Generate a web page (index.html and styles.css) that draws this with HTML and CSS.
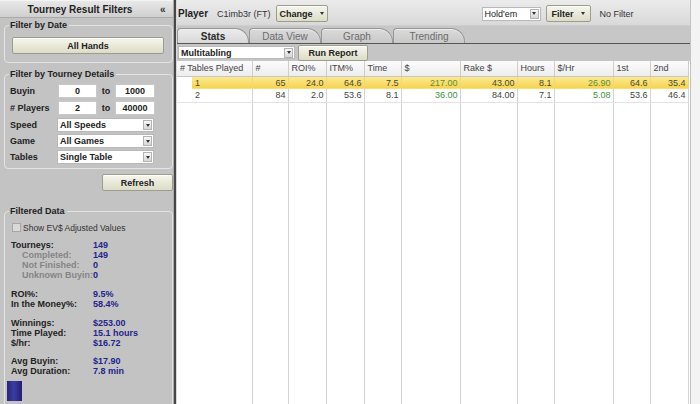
FILE: index.html
```html
<!DOCTYPE html>
<html>
<head>
<meta charset="utf-8">
<link rel="stylesheet" href="styles.css">
</head>
<body>
<div class="app">
  <aside class="left">
    <div class="lhead"><span class="ltitle">Tourney Result Filters</span><span class="collapse">«</span></div>
    <fieldset class="fs fs-date">
      <legend>Filter by Date</legend>
      <div class="btn btn-wide">All Hands</div>
    </fieldset>
    <fieldset class="fs fs-tourney">
      <legend>Filter by Tourney Details</legend>
      <div class="frow"><span class="flabel">Buyin</span><span class="inp">0</span><span class="to">to</span><span class="inp inp2">1000</span></div>
      <div class="frow"><span class="flabel"># Players</span><span class="inp">2</span><span class="to">to</span><span class="inp inp2">40000</span></div>
      <div class="frow srow"><span class="flabel slabel">Speed</span><span class="sel lsel"><span>All Speeds</span><span class="arrow"></span></span></div>
      <div class="frow srow"><span class="flabel slabel">Game</span><span class="sel lsel"><span>All Games</span><span class="arrow"></span></span></div>
      <div class="frow srow"><span class="flabel slabel">Tables</span><span class="sel lsel"><span>Single Table</span><span class="arrow"></span></span></div>
    </fieldset>
    <div class="refresh-wrap"><div class="btn btn-refresh">Refresh</div></div>
    <fieldset class="fs fs-data">
      <legend>Filtered Data</legend>
      <div class="chk-row"><span class="chk"></span><span class="chk-text">Show EV$ Adjusted Values</span></div>
      <div class="grp first">
        <div class="stat"><span class="sl">Tourneys:</span><span class="sv">149</span></div>
        <div class="stat sub"><span class="sl">Completed:</span><span class="sv">149</span></div>
        <div class="stat sub"><span class="sl">Not Finished:</span><span class="sv">0</span></div>
        <div class="stat sub"><span class="sl">Unknown Buyin:</span><span class="sv">0</span></div>
      </div>
      <div class="grp">
        <div class="stat"><span class="sl">ROI%:</span><span class="sv">9.5%</span></div>
        <div class="stat"><span class="sl">In the Money%:</span><span class="sv">58.4%</span></div>
      </div>
      <div class="grp">
        <div class="stat"><span class="sl">Winnings:</span><span class="sv">$253.00</span></div>
        <div class="stat"><span class="sl">Time Played:</span><span class="sv">15.1 hours</span></div>
        <div class="stat"><span class="sl">$/hr:</span><span class="sv">$16.72</span></div>
      </div>
      <div class="grp last">
        <div class="stat"><span class="sl">Avg Buyin:</span><span class="sv">$17.90</span></div>
        <div class="stat"><span class="sl">Avg Duration:</span><span class="sv">7.8 min</span></div>
      </div>
      <div class="bar"></div>
    </fieldset>
  </aside>
  <div class="sep"></div>
  <main class="right">
    <div class="topbar">
      <span class="player">Player</span>
      <span class="pname">C1imb3r (FT)</span>
      <div class="btn btn-change">Change <span class="caret"></span></div>
      <span class="sel game-sel"><span class="norm">Hold'em</span><span class="arrow"></span></span>
      <div class="btn btn-filter">Filter <span class="caret"></span></div>
      <span class="nofilter">No Filter</span>
    </div>
    <div class="tabs">
      <div class="tab active">Stats</div>
      <div class="tab">Data View</div>
      <div class="tab">Graph</div>
      <div class="tab">Trending</div>
    </div>
    <div class="toolbar">
      <span class="sel report-sel"><span>Multitabling</span><span class="arrow"></span></span>
      <div class="btn btn-run">Run Report</div>
    </div>
    <table class="grid">
      <colgroup>
        <col style="width:75px"><col style="width:36px"><col style="width:38px"><col style="width:38px"><col style="width:37px"><col style="width:59px"><col style="width:57px"><col style="width:37px"><col style="width:59px"><col style="width:37px"><col style="width:38px">
      </colgroup>
      <thead>
        <tr><th># Tables Played</th><th>#</th><th>ROI%</th><th>ITM%</th><th>Time</th><th>$</th><th>Rake $</th><th>Hours</th><th>$/Hr</th><th>1st</th><th>2nd</th></tr>
      </thead>
      <tbody>
        <tr class="hl"><td class="c1">1</td><td>65</td><td>24.0</td><td>64.6</td><td>7.5</td><td class="g">217.00</td><td>43.00</td><td>8.1</td><td class="g">26.90</td><td>64.6</td><td>35.4</td></tr>
        <tr class="r2"><td class="c1">2</td><td>84</td><td>2.0</td><td>53.6</td><td>8.1</td><td class="g">36.00</td><td>84.00</td><td>7.1</td><td class="g">5.08</td><td>53.6</td><td>46.4</td></tr>
        <tr class="fill"><td></td><td></td><td></td><td></td><td></td><td></td><td></td><td></td><td></td><td></td><td></td></tr>
      </tbody>
    </table>
  </main>
  <div class="edge"></div>
</div>
</body>
</html>
```
FILE: styles.css
```css
* { box-sizing: border-box; }
html, body { margin: 0; padding: 0; }
body {
  width: 700px; height: 404px; overflow: hidden;
  font-family: "Liberation Sans", Arial, sans-serif;
  font-size: 9px; color: #222; background: #fff;
}
.app { display: flex; height: 404px; }

/* ---------- left panel ---------- */
.left { width: 173px; flex: none; background: #c3c3c3; overflow: hidden; }
.lhead {
  height: 18px; display: flex; align-items: center;
  background: linear-gradient(#e8e8e8, #cfcfcf);
  border-bottom: 1px solid #a9a9a9;
  border-top: 1px solid #f4f4f4;
}
.ltitle { flex: 1; text-align: center; font-weight: bold; font-size: 10px; color: #222; }
.collapse { width: 13px; font-weight: bold; font-size: 10px; color: #333; }

.fs {
  margin: 0 0 0 4px; width: 169px; min-width: 0;
  border: 1px solid #e3e3e3; border-radius: 4px;
  padding: 0 4px;
}
.fs legend {
  font-weight: bold; font-size: 9px; line-height: 10px;
  padding: 0 2px 0 1px; color: #222;
}
.fs-date { margin-top: 2px; padding-top: 7px; padding-bottom: 8px; }
.fs-tourney { margin-top: 6px; padding-top: 5px; padding-bottom: 4px; }
.fs-data { margin-top: 15px; padding-top: 6px; padding-left: 6px; height: 230px; }
.fs-data legend { margin-left: -2px; }

.btn {
  display: flex; align-items: center; justify-content: center;
  font-weight: bold; font-size: 9px; color: #222;
  background: linear-gradient(#f6f6ec, #dcdcc8);
  border: 1px solid #9d9d8e; border-radius: 2px;
  box-shadow: inset 0 1px 0 #fff;
}
.btn-wide { margin-left: 3px; width: 152px; height: 17px; }

.frow { display: flex; align-items: center; height: 14px; margin-bottom: 3px; }
.frow.srow { margin-bottom: 2px; }
.frow.srow:last-child { margin-bottom: 0; }
.flabel { width: 49px; padding-left: 1px; font-weight: bold; color: #222; }
.slabel { width: 48px; }
.inp {
  width: 39px; height: 14px; background: #fff; border: 1px solid #c9c9c9;
  display: flex; align-items: center; justify-content: center;
  font-weight: bold; color: #222;
}
.inp2 { width: 40px; }
.to { width: 18px; text-align: center; font-weight: bold; }

.sel {
  display: flex; align-items: center; justify-content: space-between;
  background: #fff; border: 1px solid #b9b9b9;
  padding: 0 1px 0 2px; font-weight: bold; color: #222;
}
.sel .norm { font-weight: normal; }
.lsel { width: 97px; height: 14px; }
.arrow {
  width: 9px; height: 10px; flex: none;
  border: 1px solid #b3b3b3; background: linear-gradient(#f7f7f7, #d7d7d7);
  display: flex; align-items: center; justify-content: center;
}
.arrow::after {
  content: ""; width: 0; height: 0;
  border-top: 3px solid #333; border-left: 2px solid transparent; border-right: 2px solid transparent;
}
.caret {
  display: inline-block; width: 0; height: 0; margin-left: 7px;
  border-top: 3px solid #333; border-left: 2px solid transparent; border-right: 2px solid transparent;
}

.refresh-wrap { display: flex; justify-content: flex-end; margin-top: 5px; }
.btn-refresh { width: 71px; height: 17px; }

.chk-row { display: flex; align-items: center; height: 11px; }
.chk { width: 9px; height: 9px; margin-left: 1px; background: #d9d9d9; border: 1px solid #a6a6a6; }
.chk-text { margin-left: 2px; font-size: 8.5px; color: #333; }
.grp { margin-top: 9px; }
.grp.first { margin-top: 7px; }
.grp.last { margin-top: 8px; }
.stat { display: flex; line-height: 10px; font-weight: bold; }
.sl { width: 82px; color: #222; }
.sub .sl { padding-left: 11px; color: #858585; }
.sv { color: #23238c; }
.bar {
  margin: 5px 0 0 -4px; width: 15px; height: 20px;
  background: linear-gradient(to right, #26267a, #3c3ca4 45%, #202070);
}

.sep { width: 3px; flex: none; background: linear-gradient(to right, #a9a9a9 0 1px, #474747 1px 3px); }

/* ---------- right panel ---------- */
.right { width: 514px; flex: none; display: flex; flex-direction: column; border-left: 1px solid #d9d9d9; }
.topbar {
  height: 26px; flex: none; display: flex; align-items: center;
  padding: 2px 0 0 1px;
  background: linear-gradient(#ebebeb, #d9d9d9);
  border-bottom: 1px solid #cdcdcd;
}
.player { font-weight: bold; font-size: 10px; color: #222; }
.pname { margin-left: 9px; color: #333; }
.btn-change { margin-left: 5px; width: 52px; height: 17px; }
.game-sel { margin-left: 154px; width: 59px; height: 14px; }
.btn-filter { margin-left: 5px; width: 45px; height: 17px; }
.nofilter { margin-left: 9px; color: #333; }

.tabs {
  height: 18px; flex: none; display: flex; align-items: flex-end;
  background: #c7c7c7; border-bottom: 1px solid #555;
}
.tab {
  width: 72px; height: 15px; display: flex; align-items: center; justify-content: center;
  font-size: 10px; color: #6b6b6b;
  background: linear-gradient(#dadada, #c9c9c9);
  border: 1px solid #969696; border-bottom: none;
  border-radius: 4px 14px 0 0;
  box-shadow: inset 0 1px 0 #eee;
}
.tab.active { font-weight: bold; color: #2a2a2a; background: linear-gradient(#ececec, #d8d8d8); }

.toolbar {
  height: 17px; flex: none; display: flex; align-items: center;
  background: #c5c5c5; padding-left: 1px;
}
.report-sel { width: 117px; height: 13px; }
.btn-run { margin-left: 3px; width: 70px; height: 16px; }

.grid {
  width: 511px; height: 343px; table-layout: fixed;
  border-collapse: collapse; border-spacing: 0;
}
.grid th {
  height: 15px; padding: 0 3px; text-align: left; font-weight: normal; color: #444;
  background: linear-gradient(#fbfbfb, #ededed);
  border-right: 1px solid #cdcdcd; border-bottom: 1px solid #c6c6c6;
  white-space: nowrap; overflow: hidden;
}
.grid td {
  height: 13px; padding: 0 2px; text-align: right; color: #444;
  border-right: 1px solid #d4d4d4; white-space: nowrap;
}
.grid td.c1 { text-align: left; padding-left: 18px; }
.grid td.g { color: #3f923f; }
.grid tr.hl td {
  background: linear-gradient(#fcea95, #f6d24e);
  border-right-color: #f0d878;
  color: #4d4a2a;
}
.grid tr.hl td.g { color: #5f8f2f; }
.grid tr.hl td.c1 {
  background: linear-gradient(#fff, #fff) left top / 15px 100% no-repeat, linear-gradient(#fcea95, #f6d24e);
}
.grid tr.r2 td { border-bottom: 1px solid #e3e3e3; }
.grid tr.fill td { height: auto; }

.edge { flex: 1; background: #f3f3f3; border-left: 1px solid #c2c2c2; }
```
